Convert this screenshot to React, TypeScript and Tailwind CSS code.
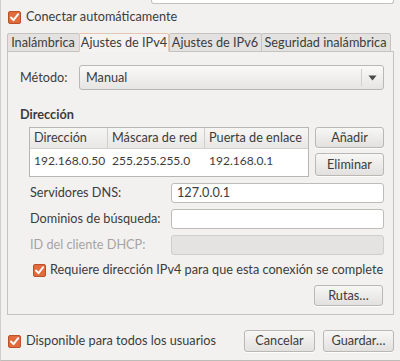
import React from 'react';

const font = { fontFamily: 'Lato, "Noto Sans", sans-serif' };

function Check() {
  return (
    <span className="w-[13px] h-[13px] rounded-[2px] bg-[#e26b3c] border border-[#b9512a] flex items-center justify-center shrink-0">
      <svg width="11" height="11" viewBox="0 0 11 11">
        <path d="M2 5.5 L4.5 8.2 L9.2 2.2" fill="none" stroke="#fff" strokeWidth="1.9" strokeLinecap="round" strokeLinejoin="round" />
      </svg>
    </span>
  );
}

function Btn({ label, className = '' }: { label: string; className?: string }) {
  return (
    <button className={`flex items-center justify-center whitespace-nowrap rounded-[3px] border border-[#b9b8b5] bg-gradient-to-b from-[#f7f7f6] to-[#e2e1df] text-[#3c3c3c] shadow-[0_1px_0_rgba(255,255,255,0.8)] ${className}`}>
      {label}
    </button>
  );
}

function Field({ label, value = '', disabled = false }: { label: string; value?: string; disabled?: boolean }) {
  return (
    <div className="flex items-center h-[20px]">
      <span className={`w-[163px] pl-[22px] ${disabled ? 'text-[#a5a4a2]' : ''}`}>{label}</span>
      <div
        className={`w-[213px] h-[20px] rounded-[3px] border px-[5px] flex items-center ${
          disabled ? 'bg-[#e4e3e1] border-[#cfceca]' : 'bg-white border-[#bdbcb9]'
        }`}
      >
        {value}
      </div>
    </div>
  );
}

export default function App() {
  const tabs = ['Inalámbrica', 'Ajustes de IPv4', 'Ajustes de IPv6', 'Seguridad inalámbrica'];
  const widths = ['w-[73px]', 'w-[90px]', 'w-[93px]', 'w-[130px]'];

  return (
    <div style={font} className="w-[400px] h-[361px] bg-[#f2f1f0] text-[12.7px] text-[#3c3c3c] overflow-hidden whitespace-nowrap border-b border-[#bdbcb9] border-l border-l-[#d0cfcc]">
      {/* campo de arriba, recortado */}
      <div className="ml-[150px] mr-[6px] h-[4px] border border-t-0 border-[#c3c2bf] rounded-b-[3px] bg-white" />

      <div className="flex items-center gap-[5px] pl-[7px] mt-[5px] h-[16px]">
        <Check />
        <span>Conectar automáticamente</span>
      </div>

      <div className="mt-[8px] px-[6px] flex items-end h-[19px] relative z-10">
        {tabs.map((t, i) => (
          <div
            key={t}
            className={`${widths[i]} h-[19px] flex items-center justify-center border rounded-t-[2px] ${
              i === 1
                ? 'bg-[#f4f3f2] border-[#e6c6b2] border-b-[#f4f3f2]'
                : 'bg-[#e3e2e0] border-[#c4c3c0] mx-[-0.5px]'
            }`}
          >
            {t}
          </div>
        ))}
      </div>

      <div className="mx-[6px] -mt-px h-[264px] border border-[#c4c3c0] bg-[#f2f1f0] flex flex-col">
        <div className="flex items-center mt-[13px] h-[25px]">
          <span className="w-[71px] pl-[12px]">Método:</span>
          <div className="w-[305px] h-[25px] rounded-[3px] border border-[#b9b8b5] bg-gradient-to-b from-[#f9f9f8] to-[#e6e5e3] flex items-center">
            <span className="flex-1 pl-[6px]">Manual</span>
            <span className="w-[22px] h-[17px] border-l border-[#d0cfcc] flex items-center justify-center">
              <svg width="9" height="6" viewBox="0 0 9 6">
                <path d="M0.5 0.5 H8.5 L4.5 5.5 Z" fill="#4a4a4a" />
              </svg>
            </span>
          </div>
        </div>

        <div className="mt-[17px] pl-[12px] font-bold h-[16px] flex items-center">Dirección</div>

        <div className="mt-[4px] flex ml-[21px]">
          <div className="w-[280px] h-[50px] border border-[#b7b6b3] bg-white flex flex-col">
            <div className="flex h-[21px] bg-gradient-to-b from-[#f6f6f5] to-[#e8e7e5] border-b border-[#d3d2cf]">
              <div className="w-[78px] pl-[4px] flex items-center border-r border-[#cfcecb]">Dirección</div>
              <div className="w-[97px] pl-[4px] flex items-center border-r border-[#cfcecb]">Máscara de red</div>
              <div className="flex-1 pl-[4px] flex items-center">Puerta de enlace</div>
            </div>
            <div className="flex h-[24px] items-center text-[12px]">
              <div className="w-[78px] pl-[4px]">192.168.0.50</div>
              <div className="w-[97px] pl-[4px]">255.255.255.0</div>
              <div className="flex-1 pl-[4px]">192.168.0.1</div>
            </div>
          </div>
          <div className="ml-[6px] flex flex-col gap-[5px]">
            <Btn label="Añadir" className="w-[69px] h-[21px]" />
            <Btn label="Eliminar" className="w-[69px] h-[23px]" />
          </div>
        </div>

        <div className="mt-[6px] flex flex-col gap-[6px]">
          <Field label="Servidores DNS:" value="127.0.0.1" />
          <Field label="Dominios de búsqueda:" />
          <Field label="ID del cliente DHCP:" disabled />
        </div>

        <div className="mt-[7px] pl-[25px] flex items-center gap-[4px] h-[16px]">
          <Check />
          <span>Requiere dirección IPv4 para que esta conexión se complete</span>
        </div>

        <div className="mt-[7px] flex justify-end pr-[10px]">
          <Btn label="Rutas…" className="w-[69px] h-[21px]" />
        </div>
      </div>

      <div className="mt-[15px] flex items-center pl-[7px] pr-[6px] h-[22px]">
        <Check />
        <span className="ml-[5px] flex-1">Disponible para todos los usuarios</span>
        <Btn label="Cancelar" className="w-[71px] h-[22px]" />
        <Btn label="Guardar…" className="ml-[8px] w-[71px] h-[22px]" />
      </div>
    </div>
  );
}
